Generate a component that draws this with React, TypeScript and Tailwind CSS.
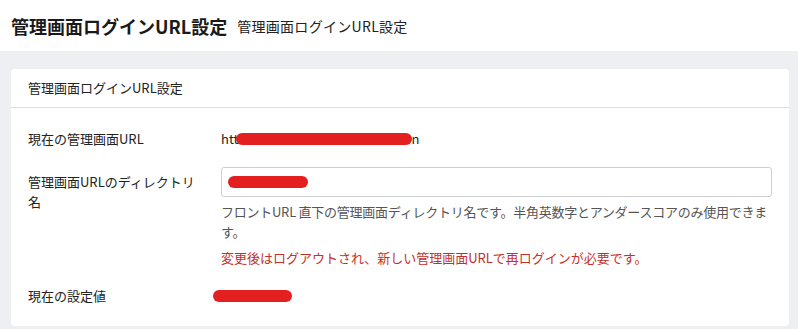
const font = { fontFamily: '"Noto Sans CJK JP", "Noto Sans", sans-serif' };

const Redacted = ({ className }: { className: string }) => (
  <span className={`inline-block rounded-full bg-[#e41f1f] ${className}`} />
);

const App = () => {
  return (
    <div className="w-[798px] h-[329px] overflow-hidden bg-[#eeeff3] text-[#222]" style={font}>
      {/* Page header */}
      <header className="h-[51px] bg-white flex items-center px-[11px] gap-[10px]">
        <h1 className="text-[18px] font-bold leading-none text-[#1a1a1a]">管理画面ログインURL設定</h1>
        <span className="text-[14px] leading-none text-[#222] tracking-[0.3px]">管理画面ログインURL設定</span>
      </header>

      {/* Card */}
      <section className="mt-[18px] ml-[11px] mr-[9px] bg-white rounded-[4px]">
        <div className="h-[39px] flex items-center px-[17px] border-b border-[#dcdcdc] text-[13px]">
          管理画面ログインURL設定
        </div>

        <div className="px-[17px] pt-[21px] pb-[20px] text-[13px] leading-[20px]">
          {/* Current URL */}
          <div className="flex">
            <div className="w-[193px] shrink-0">現在の管理画面URL</div>
            <div className="flex items-center">
              <span>htt</span>
              <Redacted className="w-[176px] h-[12px] -ml-[2px]" />
              <span className="-ml-[1px]">n</span>
            </div>
          </div>

          {/* Directory name */}
          <div className="flex mt-[18px]">
            <div className="w-[193px] shrink-0 pt-[5px] pr-[20px]">管理画面URLのディレクトリ名</div>
            <div className="flex-1">
              <div className="h-[30px] border border-[#ccd0d6] rounded-[3px] flex items-center pl-[6px]">
                <Redacted className="w-[80px] h-[12px]" />
              </div>
              <p className="mt-[5px] text-[#555] tracking-[-0.25px]">
                フロントURL 直下の管理画面ディレクトリ名です。半角英数字とアンダースコアのみ使用できます。
              </p>
              <p className="mt-[6px] text-[#c62f2a]">
                変更後はログアウトされ、新しい管理画面URLで再ログインが必要です。
              </p>
            </div>
          </div>

          {/* Current value */}
          <div className="flex mt-[18px]">
            <div className="w-[193px] shrink-0">現在の設定値</div>
            <div className="flex items-center">
              <Redacted className="w-[79px] h-[12px] -ml-[8px]" />
            </div>
          </div>
        </div>
      </section>
    </div>
  );
};

export default App;
